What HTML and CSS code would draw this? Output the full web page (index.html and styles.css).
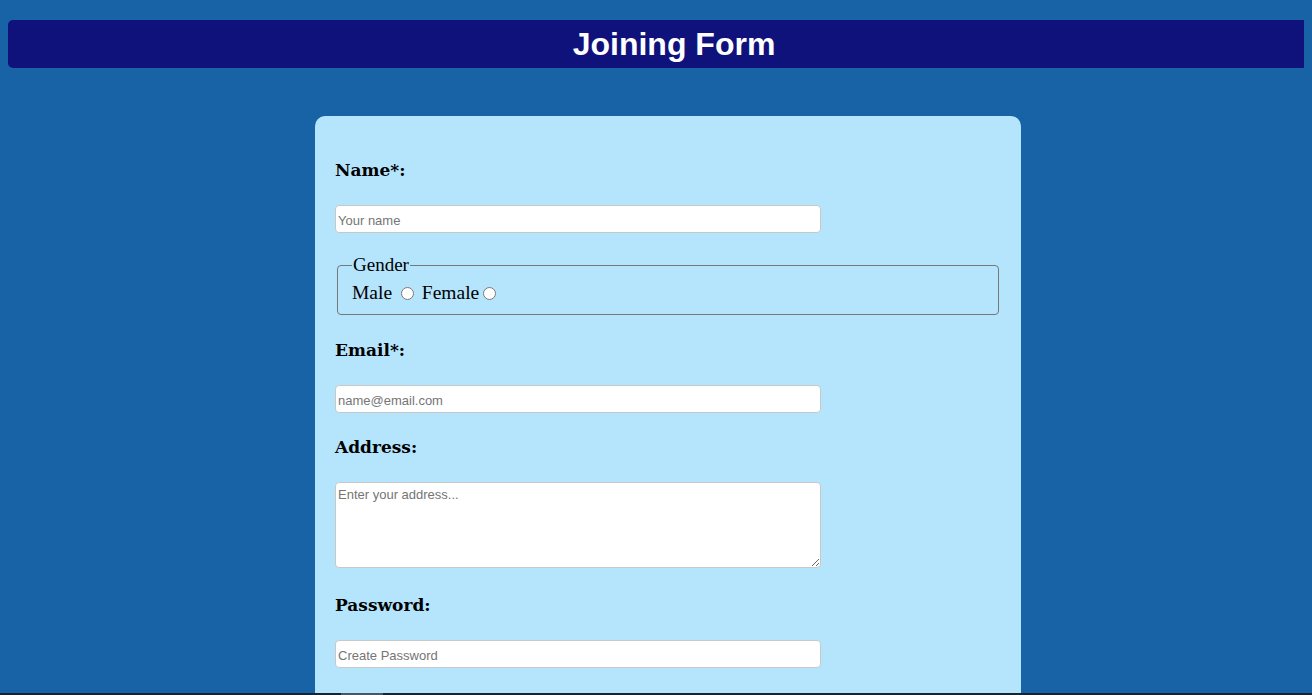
FILE: index.html
```html
<!DOCTYPE html>
<html lang="en">
<head>
<meta charset="utf-8">
<title>Joining Form</title>
<link rel="stylesheet" href="styles.css">
</head>
<body>
<header class="topbar">
  <h1 class="title">Joining Form</h1>
</header>
<main class="card">
  <form class="form">
    <label class="label" for="name">Name*:</label>
    <input class="field f-name" id="name" type="text" placeholder="Your name">
    <fieldset class="gender">
      <legend class="legend">Gender</legend>
      <div class="opts"><span class="opt">Male</span> <input class="radio" type="radio" name="g"> <span class="opt">Female</span><input class="radio" type="radio" name="g"></div>
    </fieldset>
    <label class="label" for="email">Email*:</label>
    <input class="field f-email" id="email" type="email" placeholder="name@email.com">
    <label class="label" for="addr">Address:</label>
    <textarea class="field area" id="addr" placeholder="Enter your address..."></textarea>
    <label class="label" for="pw">Password:</label>
    <input class="field" id="pw" type="password" placeholder="Create Password">
  </form>
</main>
<div class="hscroll"><div class="thumb"></div></div>
</body>
</html>
```

FILE: styles.css
```css
html {
  overflow: hidden;
}
body {
  margin: 8px;
  background: #1862a6;
  font-family: "Liberation Serif", serif;
}
.topbar {
  box-sizing: border-box;
  margin: 12px -8px 0 0;
  padding-left: 28px;
  height: 48px;
  background: #10127c;
  border-radius: 5px 0 0 5px;
  display: flex;
  align-items: center;
  justify-content: center;
}
.title {
  margin: 0;
  color: #ffffff;
  font-family: "Liberation Sans", Arial, sans-serif;
  font-weight: bold;
  font-size: 32px;
  line-height: 37px;
}
.card {
  width: 706px;
  margin: 48px 0 0 307px;
  background: #b5e5fd;
  border-radius: 10px;
  padding: 44px 0 40px 0;
  box-sizing: border-box;
}
.form {
  display: flex;
  flex-direction: column;
  align-items: flex-start;
  padding: 0 20px;
}
.label {
  display: block;
  font-family: "DejaVu Serif", Georgia, serif;
  font-weight: bold;
  font-size: 17px;
  line-height: 20px;
  height: 20px;
  margin: 0 0 25px 0;
  color: #000;
}
.field {
  box-sizing: border-box;
  width: 486px;
  height: 28px;
  margin: 0 0 24px 0;
  padding: 3px 2px 1px 2px;
  border: 1px solid #c8c8c8;
  border-radius: 4px;
  background: #fff;
  font-family: "Liberation Sans", "Comic Sans MS", sans-serif;
  font-size: 13px;
  color: #333;
  outline: none;
}
.field::placeholder {
  color: #757575;
}
.f-name {
  margin-bottom: 22px;
}
.area {
  height: 86px;
  margin-bottom: 27px;
  resize: both;
  padding-top: 4px;
}
.gender {
  box-sizing: border-box;
  align-self: stretch;
  margin: 0 2px 25px 2px;
  padding: 0 14px 0 14px;
  border: 1px solid #777;
  border-radius: 4px;
  font-family: "Liberation Serif", serif;
  height: 60px;
}
.legend {
  padding: 0 1px;
  font-size: 19px;
  line-height: 20px;
}
.opts {
  padding-top: 7px;
  font-size: 19.5px;
  line-height: 22px;
}
.radio {
  width: 13px;
  height: 13px;
  margin: 3px 3px 0 4px;
  vertical-align: -1px;
}
.hscroll {
  position: fixed;
  left: 0;
  right: 0;
  bottom: 0;
  height: 2px;
  background: #17232e;
}
.thumb {
  position: absolute;
  left: 341px;
  width: 42px;
  top: 0;
  height: 2px;
  background: #4a5561;
}
```
